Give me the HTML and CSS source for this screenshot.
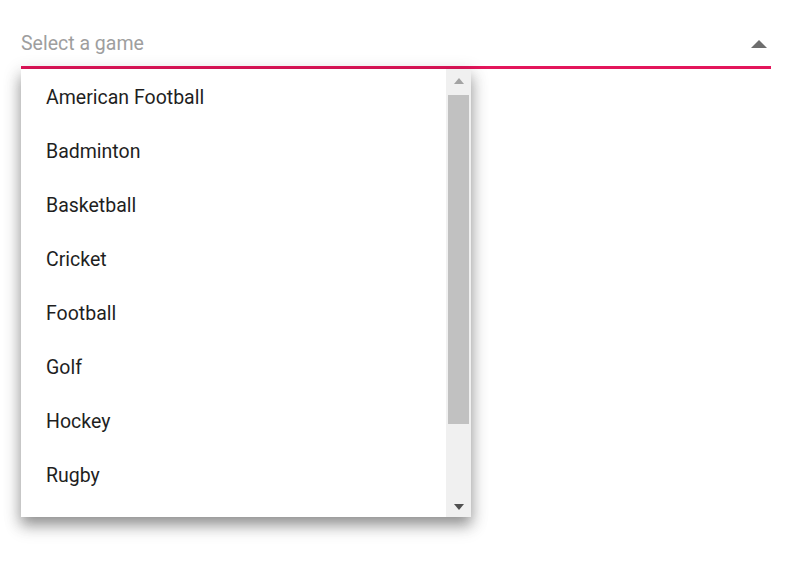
FILE: index.html
```html
<!DOCTYPE html>
<html>
<head>
<meta charset="utf-8">
<link rel="stylesheet" href="styles.css">
</head>
<body>
<div class="wrap">
  <div class="field">
    <span class="placeholder">Select a game</span>
    <span class="arrow"></span>
  </div>
  <div class="popup">
    <ul class="list">
      <li>American Football</li>
      <li>Badminton</li>
      <li>Basketball</li>
      <li>Cricket</li>
      <li>Football</li>
      <li>Golf</li>
      <li>Hockey</li>
      <li>Rugby</li>
    </ul>
    <div class="scrollbar">
      <div class="sb-btn"><span class="sb-up"></span></div>
      <div class="sb-track"><div class="sb-thumb"></div></div>
      <div class="sb-btn"><span class="sb-down"></span></div>
    </div>
  </div>
</div>
</body>
</html>
```
FILE: styles.css
```css
html, body {
  margin: 0;
  padding: 0;
  background: #fff;
  font-family: Roboto, "Noto Sans", sans-serif;
}
.wrap {
  padding: 26px 31px 60px 21px;
}
.field {
  display: flex;
  align-items: flex-start;
  justify-content: space-between;
  height: 40px;
  border-bottom: 3px solid #e3165b;
}
.placeholder {
  font-size: 19.5px;
  line-height: 36px;
  color: #9e9e9e;
}
.arrow {
  width: 0;
  height: 0;
  border-left: 8px solid transparent;
  border-right: 8px solid transparent;
  border-bottom: 8px solid #6e6e6e;
  margin-top: 14px;
  margin-right: 4px;
}
.popup {
  width: 450px;
  height: 448px;
  display: flex;
  background: #fff;
  box-shadow: 0 8px 12px -2px rgba(0,0,0,.28), 0 10px 16px 2px rgba(0,0,0,.12), 0 4px 16px 3px rgba(0,0,0,.12);
}
.list {
  list-style: none;
  margin: 0;
  padding: 0;
  flex: 1;
  overflow: hidden;
}
.list li {
  height: 54px;
  line-height: 58px;
  padding-left: 25px;
  font-size: 19.5px;
  color: #1f1f1f;
}
.scrollbar {
  width: 25px;
  background: #f0f0f0;
  display: flex;
  flex-direction: column;
}
.sb-btn {
  height: 25px;
  display: flex;
  align-items: center;
  justify-content: center;
}
.sb-up {
  width: 0; height: 0;
  border-left: 5px solid transparent;
  border-right: 5px solid transparent;
  border-bottom: 6px solid #a3a3a3;
  margin-top: -2px;
}
.sb-down {
  width: 0; height: 0;
  border-left: 5px solid transparent;
  border-right: 5px solid transparent;
  border-top: 6px solid #505050;
  margin-top: 4px;
}
.sb-track {
  flex: 1;
  padding: 1px 2px 0 2px;
}
.sb-thumb {
  height: 329px;
  background: #c1c1c1;
}
```
